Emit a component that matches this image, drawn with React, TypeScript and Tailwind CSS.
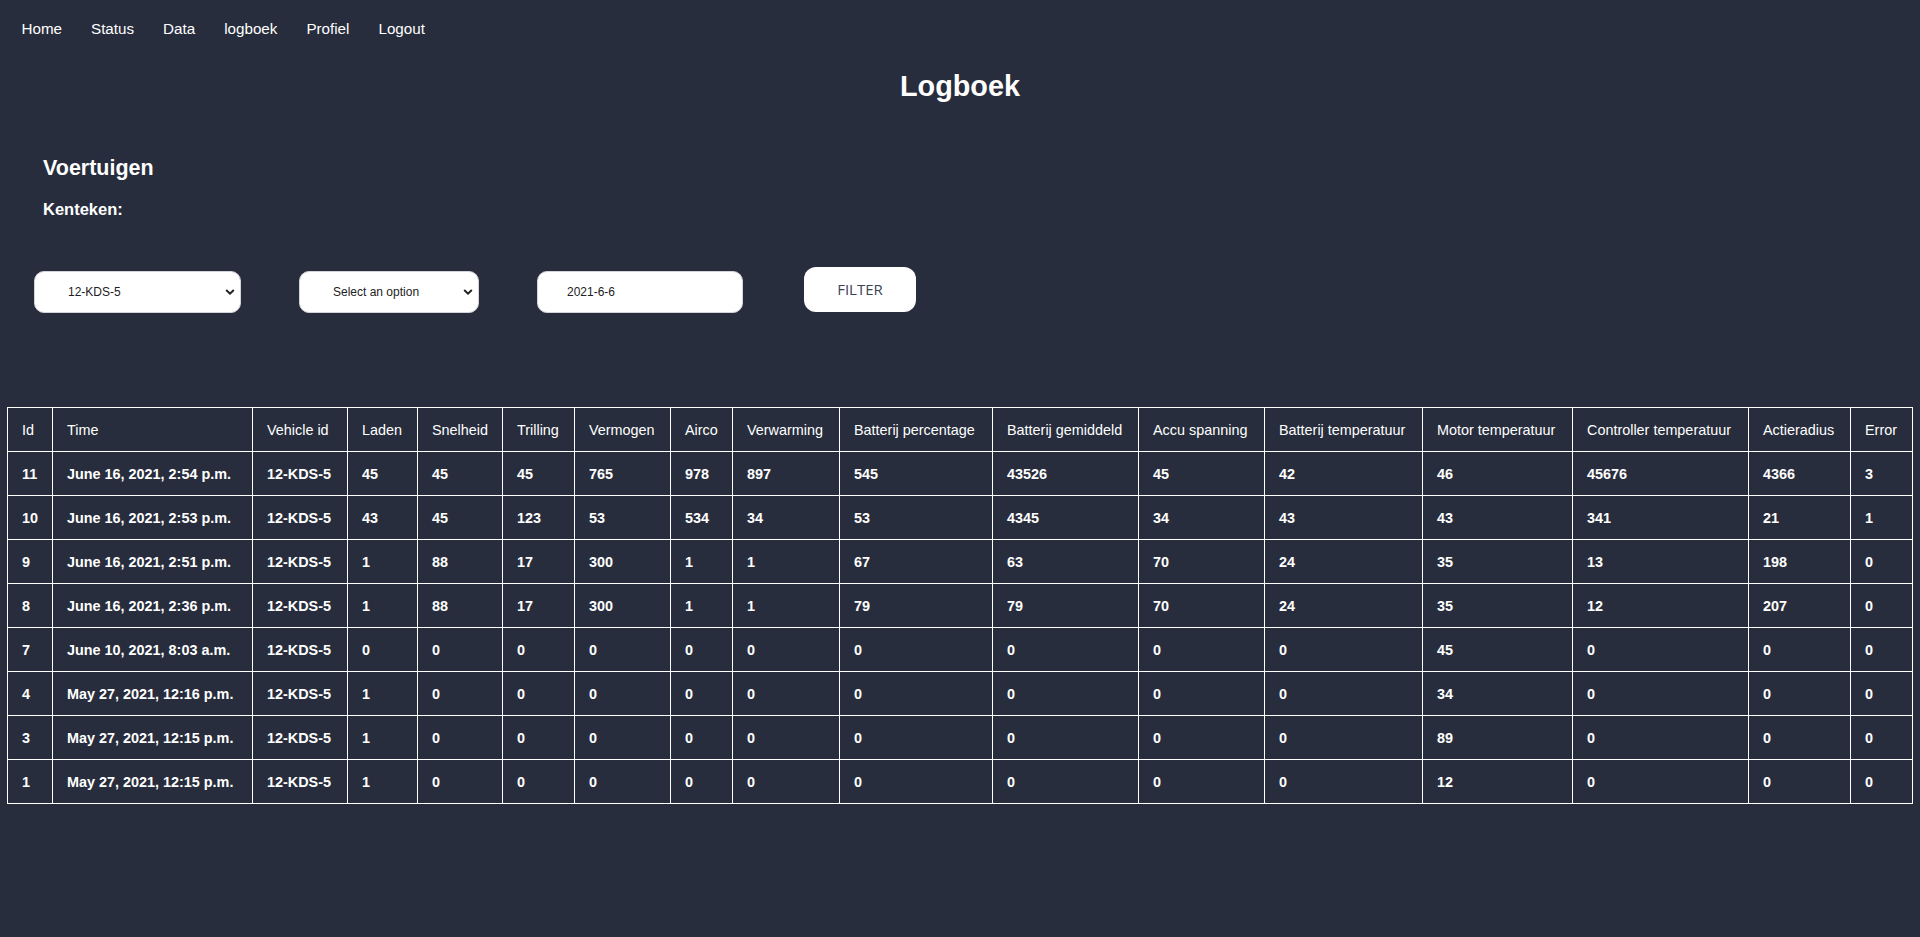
const links = ["Home", "Status", "Data", "logboek", "Profiel", "Logout"];

const columns: { label: string; width: number }[] = [
  { label: "Id", width: 45 },
  { label: "Time", width: 200 },
  { label: "Vehicle id", width: 95 },
  { label: "Laden", width: 70 },
  { label: "Snelheid", width: 85 },
  { label: "Trilling", width: 72 },
  { label: "Vermogen", width: 96 },
  { label: "Airco", width: 62 },
  { label: "Verwarming", width: 107 },
  { label: "Batterij percentage", width: 153 },
  { label: "Batterij gemiddeld", width: 146 },
  { label: "Accu spanning", width: 126 },
  { label: "Batterij temperatuur", width: 158 },
  { label: "Motor temperatuur", width: 150 },
  { label: "Controller temperatuur", width: 176 },
  { label: "Actieradius", width: 102 },
  { label: "Error", width: 62 },
];

const rows: (string | number)[][] = [
  [11, "June 16, 2021, 2:54 p.m.", "12-KDS-5", 45, 45, 45, 765, 978, 897, 545, 43526, 45, 42, 46, 45676, 4366, 3],
  [10, "June 16, 2021, 2:53 p.m.", "12-KDS-5", 43, 45, 123, 53, 534, 34, 53, 4345, 34, 43, 43, 341, 21, 1],
  [9, "June 16, 2021, 2:51 p.m.", "12-KDS-5", 1, 88, 17, 300, 1, 1, 67, 63, 70, 24, 35, 13, 198, 0],
  [8, "June 16, 2021, 2:36 p.m.", "12-KDS-5", 1, 88, 17, 300, 1, 1, 79, 79, 70, 24, 35, 12, 207, 0],
  [7, "June 10, 2021, 8:03 a.m.", "12-KDS-5", 0, 0, 0, 0, 0, 0, 0, 0, 0, 0, 45, 0, 0, 0],
  [4, "May 27, 2021, 12:16 p.m.", "12-KDS-5", 1, 0, 0, 0, 0, 0, 0, 0, 0, 0, 34, 0, 0, 0],
  [3, "May 27, 2021, 12:15 p.m.", "12-KDS-5", 1, 0, 0, 0, 0, 0, 0, 0, 0, 0, 89, 0, 0, 0],
  [1, "May 27, 2021, 12:15 p.m.", "12-KDS-5", 1, 0, 0, 0, 0, 0, 0, 0, 0, 0, 12, 0, 0, 0],
];

function Chevron() {
  return (
    <svg
      className="pointer-events-none absolute right-[6px] top-1/2 -translate-y-1/2"
      width="10"
      height="7"
      viewBox="0 0 10 7"
      fill="none"
    >
      <path d="M1.2 1.5 L5 5.2 L8.8 1.5" stroke="#222" strokeWidth="2" />
    </svg>
  );
}

function Select({ width, value }: { width: string; value: string }) {
  return (
    <div className={`relative mt-[4px] h-[42px] ${width}`}>
      <select
        defaultValue={value}
        className="h-full w-full appearance-none rounded-[10px] border border-[#d4d4d8] bg-white pl-[33px] text-[12px] text-[#222] outline-none"
      >
        <option>{value}</option>
      </select>
      <Chevron />
    </div>
  );
}

export default function App() {
  return (
    <div className="min-h-screen bg-[#272d3c] pb-10 font-['Liberation_Sans',Arial,sans-serif] text-white">
      {/* top links */}
      <nav className="flex pl-[7px] pt-[20px] text-[15.2px] leading-[18px]">
        {links.map((l) => (
          <a key={l} href="#" className="px-[14.5px] text-white">
            {l}
          </a>
        ))}
      </nav>

      <h1 className="mt-[31px] text-center text-[28.8px] font-bold leading-[34px]">Logboek</h1>

      <div className="mt-[52px] pl-[43px]">
        <h2 className="text-[21.5px] font-bold leading-[26px]">Voertuigen</h2>
        <h3 className="mt-[18px] text-[16.5px] font-bold leading-[20px]">Kenteken:</h3>
      </div>

      <div className="mt-[48px] flex items-start gap-[58px] pl-[34px]">
        <Select width="w-[207px]" value="12-KDS-5" />
        <Select width="w-[180px]" value="Select an option" />
        <input
          type="text"
          defaultValue="2021-6-6"
          className="mt-[4px] h-[42px] w-[206px] rounded-[10px] border border-[#d4d4d8] bg-white pl-[29px] text-[12px] text-[#222] outline-none"
        />
        <button className="ml-[3px] h-[45px] w-[112px] rounded-[12px] bg-white font-['Open_Sans',sans-serif] text-[15px] text-[#3c4454]">
          FILTER
        </button>
      </div>

      <div className="mt-[94px] pl-[7px] pr-[8px]">
        <table className="w-full table-fixed border-collapse border border-white text-left text-[14.4px] leading-[18px]">
          <colgroup>
            {columns.map((c) => (
              <col key={c.label} style={{ width: c.width }} />
            ))}
          </colgroup>
          <thead>
            <tr>
              {columns.map((c) => (
                <th key={c.label} className="h-[44px] border border-white px-[14px] py-0 font-normal whitespace-nowrap">
                  {c.label}
                </th>
              ))}
            </tr>
          </thead>
          <tbody>
            {rows.map((r) => (
              <tr key={r[0]}>
                {r.map((v, i) => (
                  <td key={i} className="h-[44px] border border-white px-[14px] py-0 font-bold whitespace-nowrap">
                    {v}
                  </td>
                ))}
              </tr>
            ))}
          </tbody>
        </table>
      </div>
    </div>
  );
}
